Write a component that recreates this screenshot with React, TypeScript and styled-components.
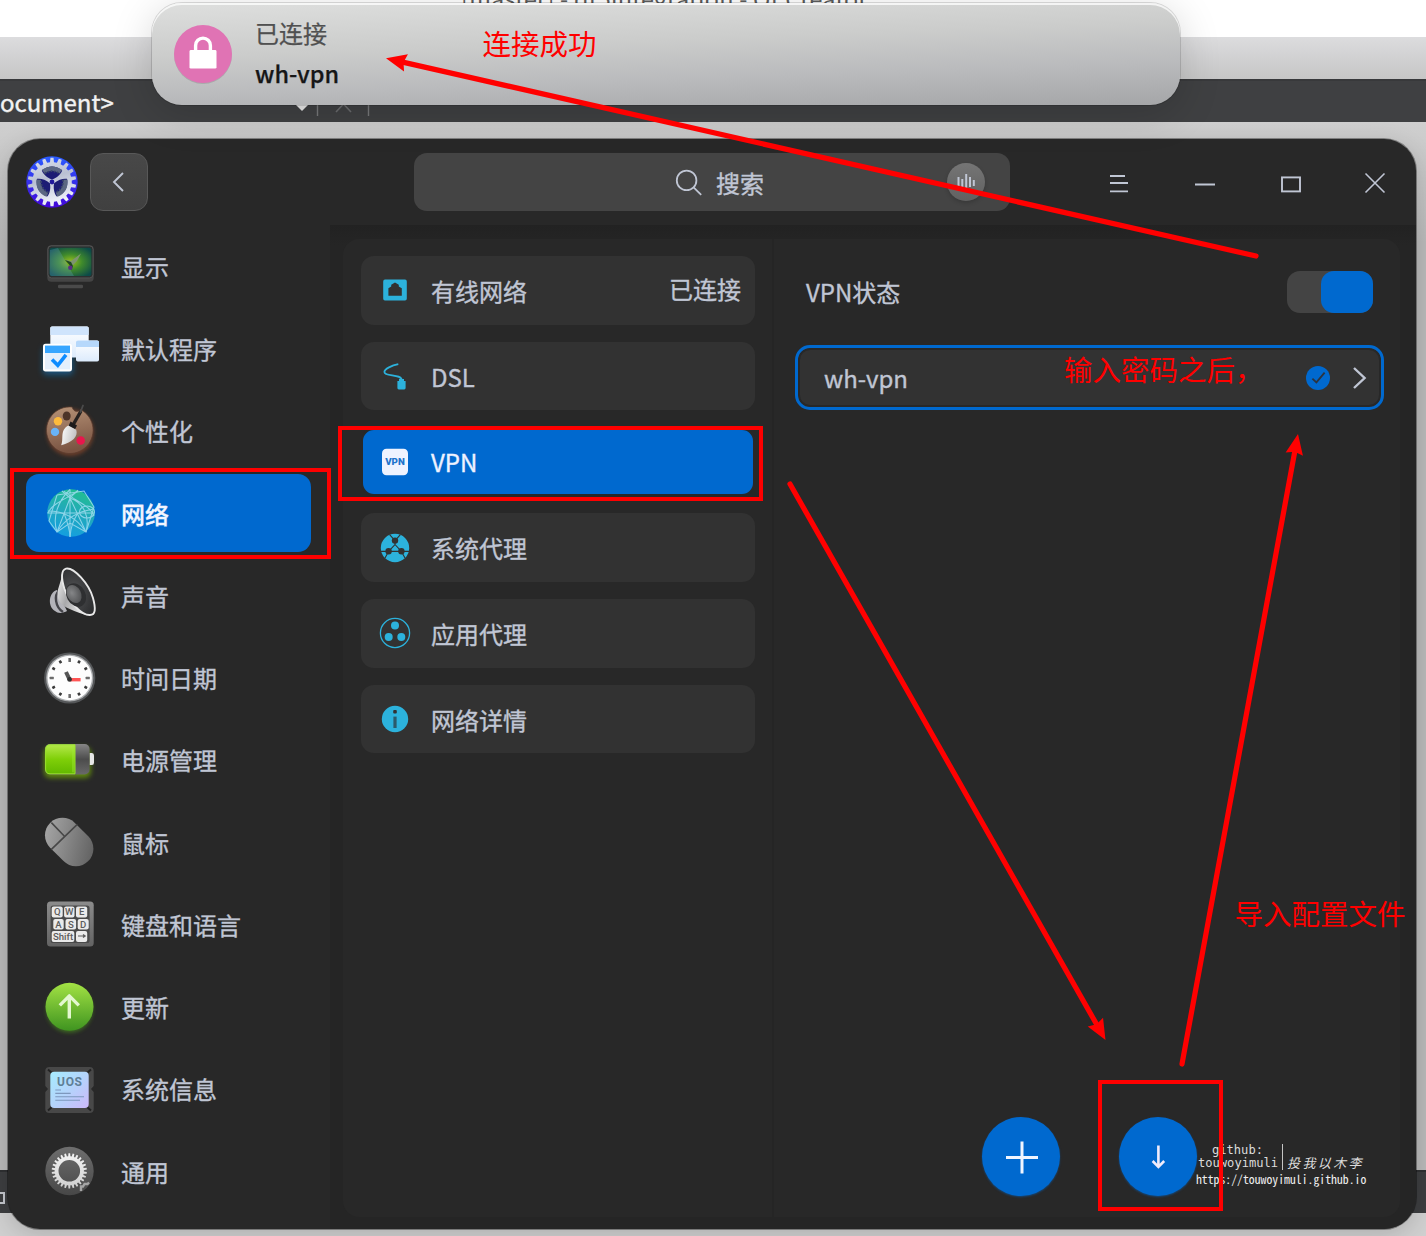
import React from 'react';
import styled, { createGlobalStyle } from 'styled-components';

const blue = '#0069cf';
const ink = '#c0c6d4';
const cyan = '#2cb2dc';
const red = '#ff0000';
const sans = `"Noto Sans CJK SC", "Noto Sans", sans-serif`;

const Global = createGlobalStyle`
  * { box-sizing: border-box; }
  body { margin: 0; font-family: ${sans}; }
  svg { display: block; overflow: visible; flex: none; }
`;

/* ---------- desktop behind the windows ---------- */

const Desktop = styled.div`
  position: relative;
  width: 1426px;
  height: 1236px;
  overflow: hidden;
  background: #bababa;
`;

const Backdrop = styled.div`
  display: flex;
  flex-direction: column;
  height: 100%;
`;

const EditorTitle = styled.div`
  height: 37px;
  background: #fff;
  color: #5c5c5c;
  font-size: 23.4px;
  line-height: 30px;
  padding-left: 461px;
  white-space: nowrap;

  span {
    display: block;
    margin-top: -17px;
    letter-spacing: 0.25px;
  }
`;

const EditorTabs = styled.div`
  height: 42px;
  background: linear-gradient(#dcdcde, #c6c6c6);
`;

const EditorBar = styled.div`
  display: flex;
  align-items: center;
  height: 43px;
  background: #3f4042;
  border-top: 2px solid #38393b;
  color: #f2f2f2;
  font-size: 24px;
  line-height: 40px;
  -webkit-text-stroke: 0.4px currentColor;
`;

const EditorText = styled.span`
  width: 116px;
`;

const BarMarks = styled.svg`
  margin-left: 174px;
`;

const EditorBody = styled.div`
  flex: 1;
  background: linear-gradient(#cfcfcf 0, #cccccc 18px, #b9b9b9 120px, #b9b9b9);
`;

const StatusBar = styled.div`
  display: flex;
  align-items: center;
  height: 43px;
  padding-top: 11px;
  background: #3d3e40;
  border-top: 2px solid #2f3032;
`;

const StatusGlyph = styled.div`
  width: 5px;
  height: 12px;
  border: 2px solid #c3c6cc;
  border-left: 0;
`;

const EditorFoot = styled.div`
  height: 23px;
  background: #d0d0d0;
`;

/* ---------- settings window ---------- */

const Window = styled.div`
  position: absolute;
  left: 8px;
  top: 139px;
  width: 1408px;
  height: 1090px;
  border-radius: 32px;
  background: #282828;
  box-shadow: 0 0 0 1px rgba(0, 0, 0, 0.35), 0 6px 24px rgba(0, 0, 0, 0.16);
  overflow: hidden;
  display: flex;
  flex-direction: column;
  color: ${ink};
  font-size: 24px;
  -webkit-text-stroke: 0.35px currentColor;

  svg text { -webkit-text-stroke: 0; }
`;

const TitleBar = styled.header`
  display: flex;
  align-items: center;
  height: 86px;
  padding-left: 18px;
  flex: none;
`;

const BackButton = styled.button`
  display: grid;
  place-items: center;
  width: 58px;
  height: 58px;
  margin-left: 12px;
  padding: 0;
  border: 1px solid #585858;
  border-radius: 13px;
  background: linear-gradient(#484848, #404040);
`;

const SearchBox = styled.div`
  display: flex;
  align-items: center;
  width: 596px;
  height: 58px;
  margin-left: 266px;
  padding: 0 25px 0 262px;
  border-radius: 13px;
  background: #444;
  line-height: 36px;

  span {
    margin-left: 13px;
    padding-top: 1px;
    flex: 1;
  }
`;

const VoiceButton = styled.div`
  display: grid;
  place-items: center;
  width: 38px;
  height: 38px;
  border-radius: 50%;
  background: linear-gradient(#757575, #616161);
  box-shadow: 0 2px 4px rgba(0, 0, 0, 0.18);
`;

const WindowControls = styled.div`
  display: flex;
  margin-left: 66px;
`;

const ControlButton = styled.div<{ $w?: number }>`
  display: grid;
  place-items: center;
  width: ${(p) => p.$w ?? 86}px;
  height: 86px;
  padding-top: 2px;
`;

const Body = styled.div`
  display: flex;
  flex: 1;
  min-height: 0;
`;

const Sidebar = styled.nav`
  display: flex;
  flex-direction: column;
  gap: 3.77px;
  width: 322px;
  padding: 2px 19px 0 18px;
`;

const NavItem = styled.div<{ $active?: boolean }>`
  display: flex;
  align-items: center;
  height: 78.5px;
  padding-left: 14px;
  border-radius: 13px;
  background: ${(p) => (p.$active ? blue : 'transparent')};
  color: ${(p) => (p.$active ? '#f2f5ff' : ink)};
  font-weight: ${(p) => (p.$active ? 500 : 400)};

  span {
    margin-left: 21px;
    padding-top: 1px;
    line-height: 36px;
  }
`;

const Content = styled.div`
  flex: 1;
  padding: 14px 16px 12px 13px;
  background: linear-gradient(#222222, #252525 20px);
`;

const Panel = styled.div`
  display: flex;
  height: 100%;
  border-radius: 16px;
  background: #282828;
`;

const Column = styled.div`
  display: flex;
  flex-direction: column;
  gap: 17.3px;
  width: 431px;
  padding: 17px 17px 0 18px;
  border-right: 2px solid #252525;
`;

const Entry = styled.div<{ $active?: boolean }>`
  display: flex;
  align-items: center;
  height: 68.5px;
  padding: 0 14px 0 ${(p) => (p.$active ? 16 : 18)}px;
  border-radius: 13px;
  border: ${(p) => (p.$active ? '2px solid #282828' : '0 solid')};
  background: ${(p) => (p.$active ? blue : '#323232')};
  color: ${(p) => (p.$active ? '#eef2ff' : ink)};

  span {
    margin-left: 20px;
    padding-top: 1px;
    line-height: 36px;
    flex: 1;
  }

  em {
    font-style: normal;
    line-height: 36px;
    margin-top: -2px;
  }
`;

const Detail = styled.div`
  display: flex;
  flex-direction: column;
  flex: 1;
  padding: 32px 16px 21px 21px;
`;

const StatusRow = styled.div`
  display: flex;
  align-items: center;
  justify-content: space-between;
  height: 42px;
  padding: 0 11px 0 11px;

  span { margin-top: -2px; }
`;

const Toggle = styled.div`
  display: flex;
  justify-content: flex-end;
  width: 86px;
  height: 42px;
  border-radius: 13px;
  background: #444;
`;

const ToggleKnob = styled.div`
  width: 52px;
  border-radius: 13px;
  background: ${blue};
`;

const Connection = styled.div`
  display: flex;
  align-items: center;
  height: 65px;
  margin-top: 32px;
  padding: 0 14px 0 26px;
  border: 3px solid ${blue};
  border-radius: 15px;
  background: #323232;
  box-shadow: inset 0 0 0 2px #282828;

  span {
    flex: 1;
    padding-top: 1px;
    line-height: 36px;
  }
`;

const Chevron = styled.svg`
  margin-left: 23px;
`;

const Actions = styled.div`
  display: flex;
  justify-content: center;
  gap: 59px;
  margin: auto 0 0 -1px;
`;

const RoundButton = styled.div`
  display: grid;
  place-items: center;
  width: 78px;
  height: 79px;
  border-radius: 50%;
  background: ${blue};
  box-shadow: 0 1px 2px rgba(0, 105, 207, 0.5);
`;

/* ---------- notification bubble ---------- */

const Notice = styled.div`
  position: absolute;
  left: 152px;
  top: 3px;
  width: 1028px;
  height: 102px;
  border-radius: 30px;
  display: flex;
  align-items: center;
  padding-left: 22px;
  background: linear-gradient(178deg, #dcdddc 4%, #cbcccb 40%, #babbbd 68%, #a6a7a9 98%);
  box-shadow: inset 0 2px 0 rgba(255, 255, 255, 0.75), 0 0 0 1px rgba(0, 0, 0, 0.13),
    0 8px 40px rgba(0, 0, 0, 0.17);
`;

const NoticeText = styled.div`
  display: flex;
  flex-direction: column;
  margin-left: 23px;
  margin-top: -2px;
  font-size: 24px;
  line-height: 41px;
  color: #505050;
  -webkit-text-stroke: 0.25px currentColor;

  strong {
    font-weight: 500;
    font-size: 23.4px;
    color: #161616;
  }
`;

/* ---------- red pen notes and signature ---------- */

const PenLayer = styled.svg`
  position: absolute;
  left: 0;
  top: 0;
`;

const PenText = styled.div<{ $x: number; $y: number }>`
  position: absolute;
  left: ${(p) => p.$x}px;
  top: ${(p) => p.$y}px;
  color: ${red};
  font-size: 28.5px;
  line-height: 40px;
  white-space: nowrap;
`;

const Signature = styled.div`
  position: absolute;
  left: 1196px;
  top: 1144px;
  width: 172px;
  color: #dcdcdc;
  white-space: nowrap;
`;

const SignatureTop = styled.div`
  display: flex;
  height: 26px;
`;

const Handle = styled.div`
  width: 87px;
  padding-left: 2px;
  border-right: 1px solid #c4c4c4;
  font: 12.1px/13px "DejaVu Sans Mono", monospace;

  div:first-child { margin-left: 14px; }
`;

const Motto = styled.div`
  margin-left: 4px;
  padding-top: 9px;
  font-size: 13px;
  line-height: 20px;
  font-style: italic;
  letter-spacing: 2.4px;
`;

const SignatureUrl = styled.div`
  font: 11.75px/17px "Noto Sans Mono CJK SC", "Noto Sans Mono", monospace;
  color: #efefef;
`;

/* ---------- icons ---------- */

function gear(cx: number, cy: number, teeth: number, rOut: number, rIn: number, duty = 0.5) {
  const step = (Math.PI * 2) / teeth;
  const pts: string[] = [];
  for (let i = 0; i < teeth; i++) {
    const a = i * step - Math.PI / 2;
    const w = (step * duty) / 2;
    const at = (r: number, t: number) =>
      `${(cx + r * Math.cos(t)).toFixed(2)} ${(cy + r * Math.sin(t)).toFixed(2)}`;
    pts.push(at(rIn, a - w * 1.25), at(rOut, a - w * 0.8), at(rOut, a + w * 0.8), at(rIn, a + w * 1.25));
  }
  return `M${pts.join('L')}Z`;
}

const ring = (cx: number, cy: number, r: number) =>
  `M${cx - r} ${cy}a${r} ${r} 0 1 0 ${2 * r} 0a${r} ${r} 0 1 0 ${-2 * r} 0Z`;

const Glyph = ({ children }: { children: React.ReactNode }) => (
  <svg width="60" height="60" viewBox="0 0 60 60">{children}</svg>
);

const Small = ({ children }: { children: React.ReactNode }) => (
  <svg width="32" height="32" viewBox="0 0 32 32">{children}</svg>
);

const Logo = () => (
  <svg width="52" height="52" viewBox="0 0 52 52">
    <defs>
      <linearGradient id="lgBg" x1="0" y1="0" x2="0" y2="1">
        <stop offset="0" stopColor="#2a5cff" />
        <stop offset="1" stopColor="#4206d8" />
      </linearGradient>
      <linearGradient id="lgGear" x1="0" y1="0" x2="0.3" y2="1">
        <stop offset="0" stopColor="#dfe5f2" />
        <stop offset="0.5" stopColor="#b9c0d2" />
        <stop offset="1" stopColor="#eef1fa" />
      </linearGradient>
    </defs>
    <circle cx="26" cy="26" r="25.7" fill="url(#lgBg)" />
    <path d={gear(26, 26, 18, 24.2, 19.8, 0.46)} fill="url(#lgGear)" />
    {[0, 120, 240].map((turn) => (
      <g key={turn} transform={`rotate(${turn} 26 26)`}>
        <path d="M26 23.6C20.5 21.6 17 18 15.8 14.6Q26 6.2 36.2 14.6C35 18 31.5 21.6 26 23.6Z" fill="#1c1c74" />
        <path d="M17.2 15.6Q26 9.4 34.8 15.6" fill="none" stroke="#5b6782" strokeWidth="4.4" />
        <path d="M18.6 17.6Q26 12.8 33.4 17.6" fill="none" stroke="#39456a" strokeWidth="1.8" strokeDasharray="1.8 1.4" />
      </g>
    ))}
    <circle cx="26" cy="26" r="2.4" fill="#20189c" />
  </svg>
);

const DisplayIcon = () => (
  <Glyph>
    <defs>
      <radialGradient id="dsp" cx="0.5" cy="0.5" r="0.62">
        <stop offset="0" stopColor="#9cc21c" />
        <stop offset="0.45" stopColor="#3f8a2c" />
        <stop offset="1" stopColor="#0d4a48" />
      </radialGradient>
    </defs>
    <rect x="18" y="48.8" width="25" height="3.4" rx="1.2" fill="#4a4a4a" />
    <rect x="7.3" y="9.3" width="46.4" height="36.4" rx="4" fill="#444" />
    <rect x="8" y="9.9" width="45" height="32" rx="3.4" fill="#2b3030" stroke="#5a5a5a" strokeWidth="0.8" />
    <rect x="9.6" y="11.8" width="41.8" height="28.2" rx="2.6" fill="url(#dsp)" />
    <path d="M10 14L18 12L34 40H12Q9.6 40 9.6 37Z" fill="#6aa5c8" opacity="0.28" />
    <path d="M25 23.5L31 25L41 17.5L37 25L33.5 28.5L31 33L30 28Z" fill="#7d9470" />
    <path d="M25 24L31 26L33 30L31.5 34L29.5 29Z" fill="#1f4a1e" />
    <circle cx="30.3" cy="31.8" r="2.2" fill="#5a2c86" />
  </Glyph>
);

const AppsIcon = () => (
  <Glyph>
    <defs>
      <linearGradient id="apW" x1="0" y1="0" x2="0" y2="1">
        <stop offset="0" stopColor="#ffffff" />
        <stop offset="1" stopColor="#dcebfc" />
      </linearGradient>
      <filter id="apGlow" x="-40%" y="-40%" width="180%" height="180%">
        <feGaussianBlur stdDeviation="3" />
      </filter>
    </defs>
    <rect x="3" y="28" width="30" height="28" rx="4" fill="#0a7bc8" opacity="0.55" filter="url(#apGlow)" />
    <rect x="10.3" y="7.5" width="38.4" height="31" rx="1.6" fill="url(#apW)" />
    <path d="M10.3 9Q10.3 7.5 12 7.5H47Q48.7 7.5 48.7 9V16H10.3Z" fill="#cfe4fc" />
    <rect x="36" y="21.5" width="23" height="21" rx="1.8" fill="url(#apW)" />
    <path d="M36 23Q36 21.5 38 21.5H57Q59 21.5 59 23V28H36Z" fill="#b6d8fb" />
    <rect x="3" y="24.8" width="29" height="27.6" rx="2.6" fill="#fff" />
    <rect x="5" y="26.6" width="25" height="7.4" fill="#37a6ff" />
    <rect x="5" y="34" width="25" height="16.4" fill="#e3effc" />
    <path d="M12 40.5L17.8 46.3L26 35.8" fill="none" stroke="#0e8cff" strokeWidth="3.6" />
  </Glyph>
);

const PaletteIcon = () => (
  <Glyph>
    <defs>
      <linearGradient id="plt" x1="0" y1="0" x2="0.2" y2="1">
        <stop offset="0" stopColor="#b89478" />
        <stop offset="1" stopColor="#7a5442" />
      </linearGradient>
      <linearGradient id="bru" x1="0" y1="0" x2="1" y2="0.3">
        <stop offset="0" stopColor="#ffffff" />
        <stop offset="1" stopColor="#c4c4c4" />
      </linearGradient>
      <filter id="plGlow" x="-40%" y="-40%" width="180%" height="180%">
        <feGaussianBlur stdDeviation="2.2" />
      </filter>
    </defs>
    <circle cx="30.3" cy="31.5" r="23.2" fill="#b0532c" opacity="0.55" filter="url(#plGlow)" />
    <path d="M32 6C34 12 39 11 40.5 8.5A23.3 23.3 0 1 1 32 6Z" fill="url(#plt)" stroke="#573a2c" strokeWidth="0.7" />
    <ellipse cx="26.7" cy="15" rx="4" ry="4.6" fill="#4d3428" />
    <circle cx="18" cy="20.2" r="4.2" fill="#fdbb3c" />
    <circle cx="15" cy="30.9" r="4.2" fill="#69b4f8" />
    <circle cx="40.7" cy="39.5" r="4.3" fill="#e8164c" />
    <path d="M33 24L41 10" stroke="#26211f" strokeWidth="3.4" />
    <path d="M40.5 11L43 4.5" stroke="#4b4b4b" strokeWidth="1.8" strokeLinecap="round" />
    <path d="M30.5 20.5L37 24.6L35 28.2L28.6 25Z" fill="#1c1a1a" />
    <path d="M28.2 24.6L36.2 28.8C38.5 35.5 32.5 41.5 21.2 44.2C24 38 19.5 29.6 28.2 24.6Z" fill="url(#bru)" />
  </Glyph>
);

const NetworkIcon = () => (
  <Glyph>
    <defs>
      <linearGradient id="net" x1="0.7" y1="0" x2="0.4" y2="1">
        <stop offset="0" stopColor="#22bf8e" />
        <stop offset="0.5" stopColor="#21a9bb" />
        <stop offset="1" stopColor="#149fe0" />
      </linearGradient>
    </defs>
    <circle cx="31" cy="30" r="23.8" fill="url(#net)" />
    <g fill="none" stroke="#9fdcf0" strokeWidth="1.05" opacity="0.85">
      <path d="M7.4 30H54M30 6.5V54M30 15L17 49M30 15L46 49M17 12L44 8L54 24L46 49L30 40L17 49L9 38L17 12" />
      <path d="M30 6.5C18 18 12 34 17 49M30 15C44 20 50 34 46 49M24 8C34 18 50 22 54 33M38 8C30 14 12 20 8 30" />
      <path d="M17 49C26 34 40 28 54 26M46 49C36 34 22 28 8 28M22 8L30 15L38 7" />
      <ellipse cx="47" cy="29" rx="7.5" ry="6" />
      <path d="M24 30Q30 46 30 54Q31 40 38 30" />
    </g>
  </Glyph>
);

const SoundIcon = () => (
  <Glyph>
    <defs>
      <linearGradient id="spk" x1="0" y1="0" x2="1" y2="0.5">
        <stop offset="0" stopColor="#f4f4f4" />
        <stop offset="0.5" stopColor="#a9a9ab" />
        <stop offset="1" stopColor="#e4e4e4" />
      </linearGradient>
      <radialGradient id="cone" cx="0.35" cy="0.55" r="0.7">
        <stop offset="0" stopColor="#5c5d5f" />
        <stop offset="0.4" stopColor="#434446" />
        <stop offset="1" stopColor="#2b2c2e" />
      </radialGradient>
      <radialGradient id="dome" cx="0.4" cy="0.4" r="0.7">
        <stop offset="0" stopColor="#858688" />
        <stop offset="1" stopColor="#4e4f51" />
      </radialGradient>
    </defs>
    <path d="M17 25C9 27 7 41 15 46C18 49 24 48 27 46Z" fill="#b4b4ba" />
    <path d="M19 26C14 30 15 42 23 47" fill="none" stroke="#45454a" strokeWidth="2.4" />
    <path d="M22 8C21 20 16 24 18 33C20 41 28 44 46 50L36 24Z" fill="url(#spk)" />
    <path d="M26 3.6C34 2 49 19 53 33C56 44 55.5 50 50 50C42 50.5 29 37 24.5 24C21 13 21 5 26 3.6Z" fill="url(#cone)" stroke="#e8e8e8" strokeWidth="1.9" />
    <ellipse cx="36" cy="30" rx="9.4" ry="12.4" transform="rotate(-28 36 30)" fill="#2e2f31" />
    <ellipse cx="34" cy="29" rx="7" ry="9.6" transform="rotate(-28 34 29)" fill="url(#dome)" />
  </Glyph>
);

const ClockIcon = () => (
  <Glyph>
    <circle cx="29.7" cy="30" r="25.6" fill="#555759" />
    <circle cx="29.7" cy="30" r="23.6" fill="#a9abad" />
    <circle cx="29.7" cy="30" r="22.2" fill="#fdfdfd" />
    {Array.from({ length: 12 }, (_, i) => (
      <rect key={i} x="28.4" y="9.9" width="2.6" height={i % 3 ? 3 : 4.2} rx="0.5" fill={i % 3 ? '#3b3b3b' : '#6b6b6b'} transform={`rotate(${i * 30} 29.7 30)`} />
    ))}
    <path d="M30 31.7H40.6" stroke="#ff5454" strokeWidth="3.4" />
    <path d="M29.6 31.6L26 24" stroke="#555" strokeWidth="4" />
    <circle cx="29.6" cy="31.4" r="2.3" fill="#333" />
  </Glyph>
);

const BatteryIcon = () => (
  <Glyph>
    <defs>
      <linearGradient id="bat" x1="0" y1="0" x2="0" y2="1">
        <stop offset="0" stopColor="#b4e84a" />
        <stop offset="0.5" stopColor="#7fcf08" />
        <stop offset="1" stopColor="#62b800" />
      </linearGradient>
      <linearGradient id="batG" x1="0" y1="0" x2="0" y2="1">
        <stop offset="0" stopColor="#858585" />
        <stop offset="0.5" stopColor="#4c4c4c" />
        <stop offset="1" stopColor="#696969" />
      </linearGradient>
      <filter id="batGlow" x="-40%" y="-40%" width="180%" height="190%">
        <feGaussianBlur stdDeviation="2.6" />
      </filter>
    </defs>
    <rect x="4" y="17" width="47" height="31" rx="6" fill="#7fbf00" opacity="0.62" filter="url(#batGlow)" />
    <path d="M49.5 23H52Q54 23 54 25.5V32.5Q54 35 52 35H49.5Z" fill="#e6e6e6" />
    <rect x="5" y="14.1" width="44.6" height="30.4" rx="5" fill="url(#batG)" />
    <path d="M35 14.8H10Q5.6 14.8 5.6 19.5V39Q5.6 43.8 10 43.8H35Z" fill="url(#bat)" stroke="#9be52c" strokeWidth="1" />
    <path d="M33 16.4V42.4" stroke="#9ee838" strokeWidth="0.8" />
  </Glyph>
);

const MouseIcon = () => (
  <Glyph>
    <defs>
      <linearGradient id="mou" x1="0.3" y1="0" x2="0.7" y2="1">
        <stop offset="0" stopColor="#a5a5a5" />
        <stop offset="1" stopColor="#626262" />
      </linearGradient>
    </defs>
    <rect x="11.7" y="3" width="35" height="54" rx="17.5" transform="rotate(-45 29.2 30)" fill="url(#mou)" />
    <path d="M11.4 37.4L37.3 12.4M11.4 10.6L24.2 24" stroke="#474747" strokeWidth="1.6" fill="none" />
  </Glyph>
);

const keys: [number, number, number, number, string][] = [
  [11.7, 12.6, 11, 10.8, 'Q'],
  [24.1, 12.6, 10.4, 10.8, 'W'],
  [36, 12.6, 11.2, 10.8, 'E'],
  [13.3, 24.9, 10.4, 10.6, 'A'],
  [25.5, 24.9, 10.6, 10.6, 'S'],
  [37.7, 24.9, 11, 10.6, 'D'],
  [11.7, 37.1, 22.6, 10.8, 'Shift'],
];

const KeyboardIcon = () => (
  <Glyph>
    <defs>
      <linearGradient id="kbd" x1="0" y1="0" x2="0" y2="1">
        <stop offset="0" stopColor="#8c8c8c" />
        <stop offset="1" stopColor="#636363" />
      </linearGradient>
    </defs>
    <rect x="7" y="7.6" width="46.7" height="45" rx="3.6" fill="url(#kbd)" />
    <rect x="10.6" y="11.4" width="39" height="37.6" rx="2.6" fill="#4a4a4a" />
    {keys.map(([x, y, w, h, t]) => (
      <g key={t}>
        <rect x={x} y={y} width={w} height={h} rx="2" fill="#eaeaea" />
        <text x={x + w / 2} y={y + 8.8} fontSize={9.6} fontFamily="Roboto, sans-serif" fontWeight="500" textAnchor="middle" fill="#5c5c5c">{t}</text>
      </g>
    ))}
    <rect x="36" y="37.1" width="11.2" height="10.8" rx="2" fill="#eaeaea" />
    <path d="M38 42H45M43 40.4L45.2 42L43 43.6" fill="none" stroke="#5c5c5c" strokeWidth="1.2" />
  </Glyph>
);

const UpdateIcon = () => (
  <Glyph>
    <defs>
      <linearGradient id="upd" x1="0" y1="0" x2="0" y2="1">
        <stop offset="0" stopColor="#a3e244" />
        <stop offset="1" stopColor="#3f9420" />
      </linearGradient>
      <filter id="updGlow" x="-40%" y="-40%" width="180%" height="180%">
        <feGaussianBlur stdDeviation="2" />
      </filter>
    </defs>
    <circle cx="29.5" cy="32.5" r="23" fill="#4f9c1c" opacity="0.6" filter="url(#updGlow)" />
    <circle cx="29.5" cy="29.8" r="24" fill="url(#upd)" />
    <path d="M29.3 41.6V19.5M19.8 28.4L29.3 18.9L38.8 28.4" fill="none" stroke="#e3f7cf" strokeWidth="3.4" strokeLinejoin="round" />
  </Glyph>
);

const InfoCardIcon = () => (
  <Glyph>
    <defs>
      <linearGradient id="inf" x1="0" y1="0" x2="1" y2="1">
        <stop offset="0" stopColor="#a6ecff" />
        <stop offset="0.5" stopColor="#b4d4fb" />
        <stop offset="1" stopColor="#cdb8fa" />
      </linearGradient>
    </defs>
    <path d="M9.5 8H49.5Q53.7 8 53.7 12V27L51 30L53.7 33V50Q53.7 54 49.5 54H9.5Q5.3 54 5.3 50V33L8 30L5.3 27V12Q5.3 8 9.5 8Z" fill="#484848" />
    <path d="M8 10.6L12 14M51 10.6L47 14M8 51.4L12 48M51 51.4L47 48" stroke="#222" strokeWidth="2" />
    <rect x="10.3" y="12.7" width="38.4" height="36.4" rx="4" fill="url(#inf)" />
    <text x="29.5" y="26.6" fontSize="12" fontFamily="Roboto, sans-serif" fontWeight="700" textAnchor="middle" textLength="25" fill="#5f7f96">UOS</text>
    <path d="M15.3 31H21M15.3 34.4H30.7M15.3 37.8H44M15.3 41.3H40" stroke="#7e98bd" strokeWidth="1.1" />
  </Glyph>
);

const GeneralIcon = () => (
  <Glyph>
    <defs>
      <linearGradient id="gen" x1="0" y1="0" x2="0" y2="1">
        <stop offset="0" stopColor="#6e6e6e" />
        <stop offset="1" stopColor="#474747" />
      </linearGradient>
      <linearGradient id="genG" x1="0" y1="0" x2="0" y2="1">
        <stop offset="0" stopColor="#f4f4f4" />
        <stop offset="1" stopColor="#cfcfcf" />
      </linearGradient>
    </defs>
    <circle cx="29.5" cy="30" r="24.2" fill="url(#gen)" />
    <path d={gear(29.3, 29.8, 26, 17.6, 14.6, 0.5) + ring(29.3, 29.8, 10.8)} fillRule="evenodd" fill="url(#genG)" />
    <path d="M41 50V45.5H43L44.5 43H47.5L49 41.5" fill="none" stroke="#a4a4a4" strokeWidth="2.4" />
  </Glyph>
);

const WiredIcon = () => (
  <Small>
    <path fillRule="evenodd" fill={cyan} d="M6 5.6H26Q27.8 5.6 27.8 7.4V24.8Q27.8 26.6 26 26.6H6Q4.2 26.6 4.2 24.8V7.4Q4.2 5.6 6 5.6ZM9.4 21.8H22.8V14.2L19.8 12.4V10.8L16 8.6L12.2 10.8V12.4L9.4 14.2Z" />
  </Small>
);

const DslIcon = () => (
  <Small>
    <path d="M19.3 4.2C13 5.4 5.4 8.8 5.4 12C5.4 17 22.6 13.6 22.6 20" fill="none" stroke={cyan} strokeWidth="1.8" />
    <path d="M20 19H25V21H26.6V28Q26.6 29.4 25.2 29.4H19.8Q18.4 29.4 18.4 28V21H20Z" fill={cyan} />
  </Small>
);

const VpnIcon = () => (
  <Small>
    <rect x="3" y="2.8" width="26" height="26.4" rx="4.5" fill="#eef3ff" />
    <text x="16" y="19" fontSize="9.6" fontFamily="Roboto, sans-serif" fontWeight="900" textAnchor="middle" textLength="19.6" lengthAdjust="spacingAndGlyphs" fill="#1f74cc">VPN</text>
  </Small>
);

const SystemProxyIcon = () => (
  <Small>
    <circle cx="16" cy="16" r="14.2" fill={cyan} />
    <g fill="none" stroke="#323232" strokeWidth="1.1">
      <path d="M16 8.6L10.6 2.6M16 8.6L21.4 2.6M16 9V12.5L9.6 19.4M16 12.5L22.4 19.4M9.6 19.4H22.4M9.6 19.4H2M9.6 19.4L6 26M22.4 19.4H30M22.4 19.4L26 26" />
    </g>
    <g fill="#323232">
      <circle cx="16" cy="8.6" r="3.2" />
      <circle cx="9.6" cy="19.2" r="3.2" />
      <circle cx="22.4" cy="19.2" r="3.2" />
    </g>
  </Small>
);

const AppProxyIcon = () => (
  <Small>
    <circle cx="16" cy="16" r="14.6" fill="none" stroke={cyan} strokeWidth="1.3" />
    <g fill={cyan}>
      <circle cx="16" cy="8.4" r="4" />
      <circle cx="9.7" cy="20" r="4" />
      <circle cx="22.3" cy="20" r="4" />
    </g>
  </Small>
);

const DetailsIcon = () => (
  <Small>
    <circle cx="16" cy="16" r="13.2" fill={cyan} />
    <rect x="14.2" y="7" width="3.6" height="3.6" rx="1" fill="#323232" />
    <rect x="14.4" y="13.6" width="3.2" height="11.4" fill="#2b5a6a" />
  </Small>
);

const nav: { label: string; Icon: React.FC }[] = [
  { label: '显示', Icon: DisplayIcon },
  { label: '默认程序', Icon: AppsIcon },
  { label: '个性化', Icon: PaletteIcon },
  { label: '网络', Icon: NetworkIcon },
  { label: '声音', Icon: SoundIcon },
  { label: '时间日期', Icon: ClockIcon },
  { label: '电源管理', Icon: BatteryIcon },
  { label: '鼠标', Icon: MouseIcon },
  { label: '键盘和语言', Icon: KeyboardIcon },
  { label: '更新', Icon: UpdateIcon },
  { label: '系统信息', Icon: InfoCardIcon },
  { label: '通用', Icon: GeneralIcon },
];

const entries: { label: string; Icon: React.FC; note?: string }[] = [
  { label: '有线网络', Icon: WiredIcon, note: '已连接' },
  { label: 'DSL', Icon: DslIcon },
  { label: 'VPN', Icon: VpnIcon },
  { label: '系统代理', Icon: SystemProxyIcon },
  { label: '应用代理', Icon: AppProxyIcon },
  { label: '网络详情', Icon: DetailsIcon },
];

/* A pen stroke with a round tail and a notched head at (x2, y2). */
function Arrow({ x1, y1, x2, y2 }: { x1: number; y1: number; x2: number; y2: number }) {
  const len = Math.hypot(x2 - x1, y2 - y1);
  const angle = (Math.atan2(y2 - y1, x2 - x1) * 180) / Math.PI;
  return (
    <g transform={`translate(${x1} ${y1}) rotate(${angle})`}>
      <path d={`M0 0H${len - 16}`} stroke={red} strokeWidth="5.2" strokeLinecap="round" />
      <path d={`M${len} 0L${len - 20.5} -8.8L${len - 18} 0L${len - 20.5} 8.8Z`} fill={red} />
    </g>
  );
}

export default function App() {
  return (
    <Desktop>
      <Global />
      <Backdrop>
        <EditorTitle><span>[master] - qt5integration - Qt Creator</span></EditorTitle>
        <EditorTabs />
        <EditorBar>
          <EditorText>ocument&gt;</EditorText>
          <BarMarks width="90" height="40" viewBox="0 0 90 40">
            <path d="M6 23H18L12 29Z" fill="#e8e8e8" />
            <path d="M27.5 14V34M78.5 14V34" stroke="#77787a" strokeWidth="1.4" />
            <path d="M46 14L61 30M61 30L46 14M46 30L61 14" stroke="#6a6b6d" strokeWidth="1.6" />
          </BarMarks>
        </EditorBar>
        <EditorBody />
        <StatusBar><StatusGlyph /></StatusBar>
        <EditorFoot />
      </Backdrop>

      <Window>
        <TitleBar>
          <Logo />
          <BackButton>
            <svg width="24" height="24" viewBox="0 0 24 24" fill="none" stroke={ink} strokeWidth="1.9">
              <path d="M16 3L7 12L16 21" />
            </svg>
          </BackButton>
          <SearchBox>
            <svg width="27" height="27" viewBox="0 0 27 27" fill="none" stroke={ink} strokeWidth="1.8">
              <circle cx="10.6" cy="11.4" r="9.8" />
              <path d="M17.6 18.4L25.2 25.8" />
            </svg>
            <span>搜索</span>
            <VoiceButton>
              <svg width="20" height="20" viewBox="0 0 20 20" stroke={ink} strokeWidth="2">
                <path d="M2.5 5V15M6.3 7V15M10.2 2V17M14 5V15M17.8 8V14" />
              </svg>
            </VoiceButton>
          </SearchBox>
          <WindowControls>
            <ControlButton>
              <svg width="18" height="18" viewBox="0 0 18 18" stroke={ink} strokeWidth="1.8">
                <path d="M0 2H15M0 9H18M0 17.4H18" />
              </svg>
            </ControlButton>
            <ControlButton>
              <svg width="20" height="4" viewBox="0 0 20 4" stroke={ink} strokeWidth="2">
                <path d="M0 3.6H20" />
              </svg>
            </ControlButton>
            <ControlButton>
              <svg width="20" height="17" viewBox="0 0 20 17" fill="none" stroke={ink} strokeWidth="1.9">
                <rect x="1" y="2.4" width="18" height="14" />
              </svg>
            </ControlButton>
            <ControlButton $w={82}>
              <svg width="20" height="20" viewBox="0 0 20 20" stroke={ink} strokeWidth="1.6">
                <path d="M0.5 0.5L19.5 19.5M19.5 0.5L0.5 19.5" />
              </svg>
            </ControlButton>
          </WindowControls>
        </TitleBar>

        <Body>
          <Sidebar>
            {nav.map(({ label, Icon }) => (
              <NavItem key={label} $active={label === '网络'}>
                <Icon />
                <span>{label}</span>
              </NavItem>
            ))}
          </Sidebar>
          <Content>
            <Panel>
              <Column>
                {entries.map(({ label, Icon, note }) => (
                  <Entry key={label} $active={label === 'VPN'}>
                    <Icon />
                    <span>{label}</span>
                    {note && <em>{note}</em>}
                  </Entry>
                ))}
              </Column>
              <Detail>
                <StatusRow>
                  <span>VPN状态</span>
                  <Toggle><ToggleKnob /></Toggle>
                </StatusRow>
                <Connection>
                  <span>wh-vpn</span>
                  <svg width="24" height="24" viewBox="0 0 24 24">
                    <circle cx="12" cy="12" r="12" fill={blue} />
                    <path d="M6.4 12.6L10.4 16.4L18.6 6.6" fill="none" stroke="#2b3440" strokeWidth="1.8" />
                  </svg>
                  <Chevron width="14" height="22" viewBox="0 0 14 22" fill="none" stroke={ink} strokeWidth="2.4">
                    <path d="M1 1L11.6 11L1 21" />
                  </Chevron>
                </Connection>
                <Actions>
                  <RoundButton>
                    <svg width="32" height="32" viewBox="0 0 32 32" stroke="#f0f5ff" strokeWidth="3">
                      <path d="M17 0.5V32.5M1 16.5H33" />
                    </svg>
                  </RoundButton>
                  <RoundButton>
                    <svg width="14" height="24" viewBox="0 0 14 24" fill="none" stroke="#f0ecfb" strokeWidth="2.6">
                      <path d="M7.4 0.5V21.5M1.6 16L7.4 21.8L13.2 16" />
                    </svg>
                  </RoundButton>
                </Actions>
              </Detail>
            </Panel>
          </Content>
        </Body>
      </Window>

      <Notice>
        <svg width="58" height="58" viewBox="0 0 58 58">
          <circle cx="29" cy="30" r="29" fill="#000" opacity="0.12" />
          <circle cx="29" cy="29" r="29" fill="#e073b4" />
          <rect x="15.5" y="25" width="27" height="18.6" rx="1.4" fill="#fff" />
          <path d="M21.6 26V20.5A7.4 7.4 0 0 1 36.4 20.5V26" fill="none" stroke="#fff" strokeWidth="3.4" />
        </svg>
        <NoticeText>
          已连接
          <strong>wh-vpn</strong>
        </NoticeText>
      </Notice>

      <Signature>
        <SignatureTop>
          <Handle>
            <div>github:</div>
            <div>touwoyimuli</div>
          </Handle>
          <Motto>投我以木李</Motto>
        </SignatureTop>
        <SignatureUrl>https://touwoyimuli.github.io</SignatureUrl>
      </Signature>

      <PenLayer width="1426" height="1236" viewBox="0 0 1426 1236" fill="none">
        <g stroke={red} strokeWidth="4">
          <rect x="12" y="470" width="317" height="87" />
          <rect x="340" y="428" width="421" height="71" />
          <rect x="1100" y="1082" width="121" height="127" />
        </g>
        <Arrow x1={1256} y1={256} x2={386} y2={58.3} />
        <Arrow x1={790} y1={484} x2={1105.5} y2={1040} />
        <Arrow x1={1182} y1={1064} x2={1298} y2={434} />
      </PenLayer>
      <PenText $x={482.5} $y={23}>连接成功</PenText>
      <PenText $x={1064} $y={349}>输入密码之后，</PenText>
      <PenText $x={1234.5} $y={893}>导入配置文件</PenText>
    </Desktop>
  );
}
